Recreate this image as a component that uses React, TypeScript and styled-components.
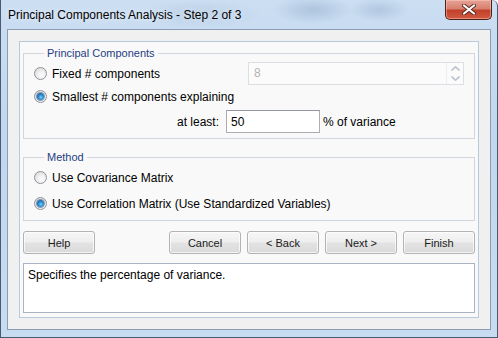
import React, { useState } from 'react';
import styled, { createGlobalStyle } from 'styled-components';

const GlobalStyle = createGlobalStyle`
  html, body { margin: 0; padding: 0; background: #fff; }
  body { font-family: "Liberation Sans", Arial, sans-serif; font-size: 12px; color: #000; }
  * { box-sizing: border-box; }
`;

const Window = styled.div`
  width: 498px;
  height: 338px;
  display: flex;
  flex-direction: column;
  border: 1px solid #4b5b6f;
  border-top: none;
  border-top-right-radius: 6px;
  background:
    radial-gradient(ellipse 40px 14px at 312px 10px, rgba(120, 150, 185, 0.35), transparent),
    radial-gradient(ellipse 30px 12px at 378px 10px, rgba(120, 150, 185, 0.3), transparent),
    radial-gradient(ellipse 60px 14px at 200px 14px, rgba(140, 165, 195, 0.25), transparent),
    linear-gradient(180deg, #cbdef2 0%, #c1d7ef 40%, #c8dcf1 100%);
`;

const TitleBar = styled.div`
  height: 29px;
  flex: none;
  display: flex;
  align-items: flex-start;
  justify-content: space-between;
  padding: 0 5px 0 7px;
`;

const Title = styled.span`
  font-size: 12px;
  line-height: 30px;
  color: #000;
  text-shadow: 0 0 6px rgba(255, 255, 255, 0.9);
`;

const CloseButton = styled.button`
  width: 47px;
  height: 20px;
  margin: 0;
  padding: 0;
  border: 1px solid #4d2119;
  border-top: none;
  border-radius: 0 0 5px 5px;
  background: linear-gradient(180deg, #e6a396 0%, #d8806f 45%, #c2412b 55%, #cf5a3f 100%);
  box-shadow: inset 0 0 0 1px rgba(255, 210, 200, 0.45);
  display: flex;
  align-items: center;
  justify-content: center;
`;

const Frame = styled.div`
  flex: 1;
  display: flex;
  padding: 0 6px 7px 6px;
`;

const Client = styled.div`
  flex: 1;
  display: flex;
  padding: 11px;
  border: 1px solid #8c9db2;
  background: #f0f0f0;
`;

const Panel = styled.div`
  flex: 1;
  display: flex;
  flex-direction: column;
  padding: 4px 3px;
  border: 1px solid #b9c9dc;
  background: #f9f9f9;
`;

const GroupBox = styled.fieldset<{ $gap: number }>`
  margin: 0;
  padding: 1px 10px 5px 10px;
  border: 1px solid #d0d6dd;
  min-width: 0;
  display: flex;
  flex-direction: column;
  gap: ${p => p.$gap}px;

  & + & {
    margin-top: 11px;
  }
`;

const Legend = styled.legend`
  margin-left: 10px;
  padding: 0 3px;
  font-size: 11px;
  line-height: 15px;
  color: #1f3e82;
`;

const Row = styled.div`
  height: 23px;
  display: flex;
  align-items: center;
  justify-content: space-between;
`;

const RadioLabel = styled.label`
  display: flex;
  align-items: center;
  gap: 5px;
  font-size: 12px;
  cursor: default;
`;

const RadioDot = styled.span<{ $checked?: boolean }>`
  width: 13px;
  height: 13px;
  border-radius: 50%;
  border: 1px solid #8f9399;
  background: radial-gradient(circle at 60% 65%, #ffffff 0%, #f1f1f1 35%, #d4d4d4 100%);
  display: inline-flex;
  align-items: center;
  justify-content: center;

  &::after {
    content: '';
    display: ${p => (p.$checked ? 'block' : 'none')};
    width: 7px;
    height: 7px;
    border-radius: 50%;
    background: radial-gradient(circle at 55% 60%, #7fd0f6 0%, #2b8fd6 40%, #0d4a8a 85%);
    box-shadow: 0 0 0 1px rgba(30, 70, 120, 0.5);
  }
`;

const Spinner = styled.div`
  width: 216px;
  height: 23px;
  display: flex;
  border: 1px solid #dcdfe3;
  background: #fbfbfb;
  color: #b4b4b4;
`;

const SpinnerValue = styled.span`
  flex: 1;
  padding-left: 5px;
  line-height: 21px;
  font-size: 12px;
`;

const SpinnerArrows = styled.div`
  width: 17px;
  display: flex;
  flex-direction: column;
  border-left: 1px solid #eceef0;
`;

const ArrowCell = styled.span`
  flex: 1;
  display: flex;
  align-items: center;
  justify-content: center;
`;

const ThresholdRow = styled.div`
  height: 23px;
  margin-top: 2px;
  display: flex;
  align-items: center;
  padding-left: 143px;
`;

const ThresholdLabel = styled.span`
  width: 42px;
  text-align: right;
  margin-right: 7px;
  white-space: nowrap;
`;

const TextInput = styled.input`
  width: 94px;
  height: 23px;
  margin: 0 3px 0 0;
  padding: 0 4px;
  border: 1px solid #abadb3;
  border-top-color: #9499a1;
  background: #fff;
  font: 12px "Liberation Sans", Arial, sans-serif;
  color: #000;
  outline: none;
`;

const ButtonRow = styled.div`
  margin-top: 10px;
  display: flex;
  gap: 6px;
`;

const Spacer = styled.div`
  flex: 1;
`;

const DialogButton = styled.button`
  width: 72px;
  height: 23px;
  margin: 0;
  padding: 0;
  border: 1px solid #b3b3b3;
  border-radius: 3px;
  background: linear-gradient(180deg, #f6f6f6 0%, #eeeeee 48%, #e3e3e3 52%, #dadada 100%);
  box-shadow: inset 0 0 0 1px rgba(255, 255, 255, 0.7);
  font: 11px "Liberation Sans", Arial, sans-serif;
  color: #1a1a1a;
`;

const Description = styled.div`
  margin-top: 9px;
  height: 50px;
  padding: 4px 4px;
  border: 1px solid #a9b3c1;
  background: #fff;
  font-size: 12px;
  line-height: 15px;
`;

const ChevronIcon: React.FC<{ up?: boolean }> = ({ up }) => (
  <svg width="9" height="5" viewBox="0 0 9 5">
    <path
      d={up ? 'M0.5 4.5 L4.5 0.8 L8.5 4.5' : 'M0.5 0.5 L4.5 4.2 L8.5 0.5'}
      fill="none"
      stroke="#bcc4cf"
      strokeWidth="1.6"
    />
  </svg>
);

const CloseGlyph = () => (
  <svg width="14" height="11" viewBox="0 0 14 11">
    <path d="M2 1.5 L12 9.5 M12 1.5 L2 9.5" stroke="#5a2a22" strokeWidth="4" strokeLinecap="round" />
    <path d="M2 1.5 L12 9.5 M12 1.5 L2 9.5" stroke="#ffffff" strokeWidth="2.2" strokeLinecap="round" />
  </svg>
);

interface RadioProps {
  checked: boolean;
  label: string;
  onSelect(): void;
}

const Radio: React.FC<RadioProps> = ({ checked, label, onSelect }) => (
  <RadioLabel onClick={onSelect}>
    <RadioDot $checked={checked} />
    {label}
  </RadioLabel>
);

const App: React.FC = () => {
  const [countMode, setCountMode] = useState<'fixed' | 'smallest'>('smallest');
  const [matrix, setMatrix] = useState<'cov' | 'cor'>('cor');
  const [variance, setVariance] = useState('50');

  return (
    <>
      <GlobalStyle />
      <Window>
        <TitleBar>
          <Title>Principal Components Analysis - Step 2 of 3</Title>
          <CloseButton aria-label="Close">
            <CloseGlyph />
          </CloseButton>
        </TitleBar>

        <Frame>
          <Client>
            <Panel>
              <GroupBox $gap={0}>
                <Legend>Principal Components</Legend>
                <Row>
                  <Radio
                    checked={countMode === 'fixed'}
                    label="Fixed # components"
                    onSelect={() => setCountMode('fixed')}
                  />
                  <Spinner>
                    <SpinnerValue>8</SpinnerValue>
                    <SpinnerArrows>
                      <ArrowCell><ChevronIcon up /></ArrowCell>
                      <ArrowCell><ChevronIcon /></ArrowCell>
                    </SpinnerArrows>
                  </Spinner>
                </Row>
                <Row>
                  <Radio
                    checked={countMode === 'smallest'}
                    label="Smallest # components explaining"
                    onSelect={() => setCountMode('smallest')}
                  />
                </Row>
                <ThresholdRow>
                  <ThresholdLabel>at least:</ThresholdLabel>
                  <TextInput value={variance} onChange={e => setVariance(e.target.value)} />
                  <span>% of variance</span>
                </ThresholdRow>
              </GroupBox>

              <GroupBox $gap={3}>
                <Legend>Method</Legend>
                <Row>
                  <Radio
                    checked={matrix === 'cov'}
                    label="Use Covariance Matrix"
                    onSelect={() => setMatrix('cov')}
                  />
                </Row>
                <Row>
                  <Radio
                    checked={matrix === 'cor'}
                    label="Use Correlation Matrix (Use Standardized Variables)"
                    onSelect={() => setMatrix('cor')}
                  />
                </Row>
              </GroupBox>

              <ButtonRow>
                <DialogButton>Help</DialogButton>
                <Spacer />
                <DialogButton>Cancel</DialogButton>
                <DialogButton>&lt; Back</DialogButton>
                <DialogButton>Next &gt;</DialogButton>
                <DialogButton>Finish</DialogButton>
              </ButtonRow>

              <Description>Specifies the percentage of variance.</Description>
            </Panel>
          </Client>
        </Frame>
      </Window>
    </>
  );
};

export default App;
